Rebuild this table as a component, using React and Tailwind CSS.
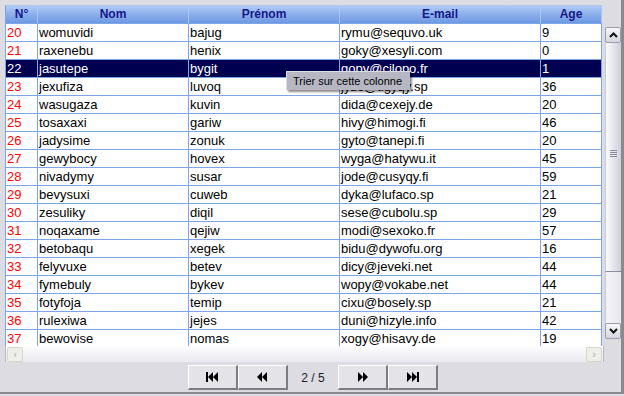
import React from "react";

const rows = [
  [20, "womuvidi", "bajug", "rymu@sequvo.uk", 9],
  [21, "raxenebu", "henix", "goky@xesyli.com", 0],
  [22, "jasutepe", "bygit", "gopy@cilopo.fr", 1],
  [23, "jexufiza", "luvoq", "jyzo@tigyqy.sp", 36],
  [24, "wasugaza", "kuvin", "dida@cexejy.de", 20],
  [25, "tosaxaxi", "gariw", "hivy@himogi.fi", 46],
  [26, "jadysime", "zonuk", "gyto@tanepi.fi", 20],
  [27, "gewybocy", "hovex", "wyga@hatywu.it", 45],
  [28, "nivadymy", "susar", "jode@cusyqy.fi", 59],
  [29, "bevysuxi", "cuweb", "dyka@lufaco.sp", 21],
  [30, "zesuliky", "diqil", "sese@cubolu.sp", 29],
  [31, "noqaxame", "qejiw", "modi@sexoko.fr", 57],
  [32, "betobaqu", "xegek", "bidu@dywofu.org", 16],
  [33, "felyvuxe", "betev", "dicy@jeveki.net", 44],
  [34, "fymebuly", "bykev", "wopy@vokabe.net", 44],
  [35, "fotyfoja", "temip", "cixu@bosely.sp", 21],
  [36, "rulexiwa", "jejes", "duni@hizyle.info", 42],
  [37, "bewovise", "nomas", "xogy@hisavy.de", 19],
];

const cols = ["w-[32px]", "w-[151px]", "w-[151px]", "w-[201px]", "w-[61px]"];
const heads = ["N°", "Nom", "Prénom", "E-mail", "Age"];

function Tri({ dir = "left", x = 0 }) {
  const d = dir === "left" ? `M${x + 5} 0 L${x} 5 L${x + 5} 10 Z` : `M${x} 0 L${x + 5} 5 L${x} 10 Z`;
  return <path d={d} fill="black" />;
}

function NavIcon({ kind }) {
  return (
    <svg width="13" height="10" viewBox="0 0 13 10">
      {kind === "first" && (<><rect x="0" y="0" width="2" height="10" fill="black" /><Tri x={2} /><Tri x={7} /></>)}
      {kind === "prev" && (<><Tri x={1} /><Tri x={6} /></>)}
      {kind === "next" && (<><Tri dir="right" x={2} /><Tri dir="right" x={7} /></>)}
      {kind === "last" && (<><Tri dir="right" x={1} /><Tri dir="right" x={6} /><rect x="11" y="0" width="2" height="10" fill="black" /></>)}
    </svg>
  );
}

function NavBtn({ kind }) {
  return (
    <div className="w-[50px] h-[25px] flex items-center justify-center bg-[#e4e4e8] border-t border-l border-white border-r-2 border-b-2 border-r-[#7c7c82] border-b-[#7c7c82]">
      <NavIcon kind={kind} />
    </div>
  );
}

function ScrollBtn({ up }) {
  return (
    <div className="w-[16px] h-[16px] flex items-center justify-center rounded-[2px] border border-[#9c9cac] bg-linear-to-b from-[#f6f6fa] to-[#d6d6e0]">
      <svg width="9" height="6" viewBox="0 0 9 6">
        <path d={up ? "M1 5 L4.5 1.5 L8 5" : "M1 1 L4.5 4.5 L8 1"} stroke="#111" strokeWidth="2" fill="none" />
      </svg>
    </div>
  );
}

export default function App() {
  return (
    <div className="w-[624px] h-[396px] bg-[#dcdce2] overflow-hidden font-['Liberation_Sans',Arial,sans-serif]">
      <div className="relative w-[624px] h-[394px] flex flex-col border-r-[3px] border-b-[2px] border-[#8a8a8e]">
        <div className="flex pt-[5px] pl-[5px] h-[346px]">
          <div className="w-[597px] h-[341px] overflow-hidden bg-white border-l border-[#7ea6e6]">
            <div className="flex h-[19px] border-b border-[#7ea6e6] bg-linear-to-b from-[#b4cdf5] via-[#8db0ec] to-[#6e99e3]">
              {heads.map((h, i) => (
                <div key={h} className={`${cols[i]} border-r border-[#a9c6f5] flex items-center justify-center text-[12px] font-bold text-[#16188a]`}>
                  {h}
                </div>
              ))}
            </div>
            {rows.map((r) => {
              const sel = r[0] === 22;
              return (
                <div key={r[0]} className={`flex h-[18px] border-b border-[#7ea6e6] text-[13px] ${sel ? "bg-[#000050] text-white" : "text-black"}`}>
                  {r.map((v, i) => (
                    <div key={i} className={`${cols[i]} border-r border-[#7ea6e6] flex items-center pl-[1px] whitespace-nowrap overflow-hidden ${i === 0 && !sel ? "text-[#ff0000]" : ""}`}>
                      {v}
                    </div>
                  ))}
                </div>
              );
            })}
          </div>
          <div className="ml-[3px] w-[16px] flex flex-col pt-[22px]">
            <ScrollBtn up />
            <div className="h-[229px] bg-linear-to-r from-[#fbfbfd] to-[#cfcfdb] border-l border-[#c8c8d2] border-b border-b-[#8c8ca0] flex items-center justify-center pb-[8px]">
              <div className="flex flex-col gap-[1px]">
                <div className="w-[7px] h-[1px] bg-[#8a8aa0]" />
                <div className="w-[7px] h-[1px] bg-[#8a8aa0]" />
                <div className="w-[7px] h-[1px] bg-[#8a8aa0]" />
                <div className="w-[7px] h-[1px] bg-[#8a8aa0]" />
              </div>
            </div>
            <div className="h-[51px] bg-linear-to-r from-[#f4f4f8] to-[#e6e6ee] border-l border-[#c8c8d2]" />
            <ScrollBtn />
          </div>
        </div>
        <div className="ml-[5px] w-[599px] h-[16px] flex items-center justify-between px-[1px] border-l border-r border-[#b8b8c0] bg-linear-to-b from-[#fdfdfe] to-[#eaeaf0]">
          <div className="w-[16px] h-[15px] rounded-[2px] border border-[#d6d6cc] bg-[#efefea] flex items-center justify-center text-[11px] font-bold text-[#c0c0c0]">‹</div>
          <div className="w-[16px] h-[15px] rounded-[2px] border border-[#d6d6cc] bg-[#efefea] flex items-center justify-center text-[11px] font-bold text-[#c0c0c0]">›</div>
        </div>
        <div className="flex justify-center pl-[5px] pt-[3px]">
          <NavBtn kind="first" />
          <NavBtn kind="prev" />
          <div className="w-[50px] h-[25px] flex items-center justify-center text-[12px] text-[#222]">2 / 5</div>
          <NavBtn kind="next" />
          <NavBtn kind="last" />
        </div>
        <div className="absolute left-[286px] top-[71px] w-[124px] h-[19px] flex items-center pl-[6px] bg-[#b6b7c3] border-t border-l border-[#dcdce6] shadow-[2px_2px_2px_rgba(0,0,0,0.45)] text-[11px] text-black whitespace-nowrap">
          Trier sur cette colonne
        </div>
      </div>
    </div>
  );
}
